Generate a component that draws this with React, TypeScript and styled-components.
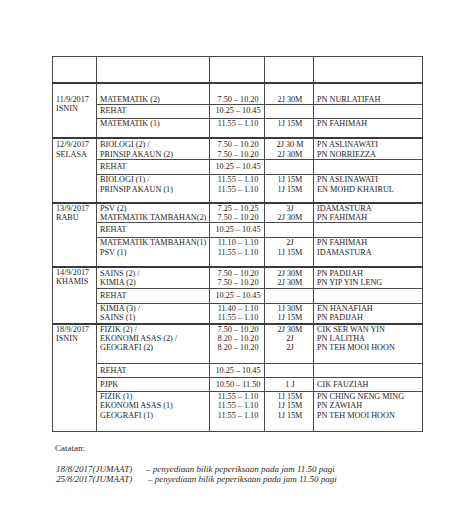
import React from 'react';
import styled, { createGlobalStyle } from 'styled-components';

const GlobalStyle = createGlobalStyle`
  html, body {
    margin: 0;
    padding: 0;
    background: #ffffff;
  }
  body {
    font-family: "Liberation Serif", "Times New Roman", serif;
    color: #222;
  }
`;

type Lesson = {
  subj: string[];
  time: string[];
  dur: string[];
  who: string[];
  h: number;
  pad?: number;
};

type Group = {
  date: string;
  day: string;
  pad: number;
  lessons: Lesson[];
};

const rehat = (h: number): Lesson => ({
  subj: ['REHAT'],
  time: ['10.25 – 10.45'],
  dur: [],
  who: [],
  h,
  pad: 2,
});

const groups: Group[] = [
  {
    date: '11/9/2017',
    day: 'ISNIN',
    pad: 11,
    lessons: [
      { subj: ['MATEMATIK (2)'], time: ['7.50 – 10.20'], dur: ['2J 30M'], who: ['PN NURLATIFAH'], h: 21, pad: 11 },
      { ...rehat(14), pad: 1 },
      { subj: ['MATEMATIK (1)'], time: ['11.55 – 1.10'], dur: ['1J 15M'], who: ['PN FAHIMAH'], h: 20 },
    ],
  },
  {
    date: '12/9/2017',
    day: 'SELASA',
    pad: 1,
    lessons: [
      {
        subj: ['BIOLOGI (2) /', 'PRINSIP AKAUN (2)'],
        time: ['7.50 – 10.20', '7.50 – 10.20'],
        dur: ['2J 30 M', '2J 30M'],
        who: ['PN ASLINAWATI', 'PN NORRIEZZA'],
        h: 21,
        pad: 1,
      },
      rehat(15),
      {
        subj: ['BIOLOGI (1) /', 'PRINSIP AKAUN (1)'],
        time: ['11.55 – 1.10', '11.55 – 1.10'],
        dur: ['1J 15M', '1J 15M'],
        who: ['PN ASLINAWATI', 'EN MOHD KHAIRUL'],
        h: 28,
      },
    ],
  },
  {
    date: '13/9/2017',
    day: 'RABU',
    pad: 0,
    lessons: [
      {
        subj: ['PSV (2)', 'MATEMATIK TAMBAHAN(2)'],
        time: ['7.25 – 10.25', '7.50 – 10.20'],
        dur: ['3J', '2J 30M'],
        who: ['IDAMASTURA', 'PN FAHIMAH'],
        h: 20,
      },
      rehat(15),
      {
        subj: ['MATEMATIK TAMBAHAN(1)', 'PSV (1)'],
        time: ['11.10 – 1.10', '11.55 – 1.10'],
        dur: ['2J', '1J 15M'],
        who: ['PN FAHIMAH', 'IDAMASTURA'],
        h: 29,
      },
    ],
  },
  {
    date: '14/9/2017',
    day: 'KHAMIS',
    pad: 0,
    lessons: [
      {
        subj: ['SAINS (2) /', 'KIMIA (2)'],
        time: ['7.50 – 10.20', '7.50 – 10.20'],
        dur: ['2J 30M', '2J 30M'],
        who: ['PN PADIJAH', 'PN YIP YIN LENG'],
        h: 21,
        pad: 1,
      },
      rehat(15),
      {
        subj: ['KIMIA (3) /', 'SAINS (1)'],
        time: ['11.40 – 1.10', '11.55 – 1.10'],
        dur: ['1J 30M', '1J 15M'],
        who: ['EN HANAFIAH', 'PN PADIJAH'],
        h: 20,
      },
    ],
  },
  {
    date: '18/9/2017',
    day: 'ISNIN',
    pad: 0,
    lessons: [
      {
        subj: ['FIZIK (2) /', 'EKONOMI ASAS (2) /', 'GEOGRAFI (2)'],
        time: ['7.50 – 10.20', '8.20 – 10.20', '8.20 – 10.20'],
        dur: ['2J 30M', '2J', '2J'],
        who: ['CIK SER WAN YIN', 'PN LALITHA', 'PN TEH MOOI HOON'],
        h: 40,
      },
      rehat(14),
      { subj: ['PJPK'], time: ['10.50 – 11.50'], dur: ['1 J'], who: ['CIK FAUZIAH'], h: 14, pad: 2 },
      {
        subj: ['FIZIK (1)', 'EKONOMI ASAS (1)', 'GEOGRAFI (1)'],
        time: ['11.55 – 1.10', '11.55 – 1.10', '11.55 – 1.10'],
        dur: ['1J 15M', '1J 15M', '1J 15M'],
        who: ['PN CHING NENG MING', 'PN ZAWIAH', 'PN TEH MOOI HOON'],
        h: 40,
      },
    ],
  },
];

const Page = styled.div`
  padding: 56px 0 0 52px;
  width: 474px;
  height: 511px;
  box-sizing: border-box;
  overflow: hidden;
`;

const Sheet = styled.table`
  width: 370px;
  border-collapse: collapse;
  table-layout: fixed;
  font-size: 8.2px;
  line-height: 9.4px;
  color: #232323;
  border: 1.5px solid #3c3c3c;
`;

const Row = styled.tr<{ $h: number; $group?: boolean }>`
  height: ${(p) => p.$h}px;
  ${(p) => (p.$group ? 'border-top: 2px solid #3a3a3a;' : '')}
`;

const Cell = styled.td<{ $align?: 'left' | 'center'; $pad?: number }>`
  border: 1px solid #4a4a4a;
  vertical-align: top;
  text-align: ${(p) => p.$align || 'left'};
  padding: ${(p) => p.$pad ?? 0}px 1px 0 3px;
  white-space: nowrap;
  overflow: hidden;
`;

const Line = styled.div`
  height: 9.4px;
`;

const Notes = styled.section`
  padding: 11px 0 0 3px;
  font-size: 9px;
  line-height: 10px;
  color: #2a2a2a;
`;

const NotesTitle = styled.div`
  margin-bottom: 11px;
`;

const NoteLine = styled.div`
  font-style: italic;
  padding-left: 1px;
  white-space: nowrap;
`;

const NoteDate = styled.span<{ $w: number }>`
  display: inline-block;
  width: ${(p) => p.$w}px;
`;

const lines = (items: string[]) => items.map((t, i) => <Line key={i}>{t}</Line>);

export default function App() {
  return (
    <>
      <GlobalStyle />
      <Page>
        <Sheet>
          <colgroup>
            <col style={{ width: 44 }} />
            <col style={{ width: 113 }} />
            <col style={{ width: 55 }} />
            <col style={{ width: 49 }} />
            <col style={{ width: 109 }} />
          </colgroup>
          <tbody>
            <Row $h={26}>
              <Cell />
              <Cell />
              <Cell />
              <Cell />
              <Cell />
            </Row>
            {groups.map((g) =>
              g.lessons.map((l, i) => (
                <Row key={g.date + i} $h={l.h} $group={i === 0}>
                  {i === 0 && (
                    <Cell rowSpan={g.lessons.length} $pad={g.pad}>
                      <Line>{g.date}</Line>
                      <Line>{g.day}</Line>
                    </Cell>
                  )}
                  <Cell $pad={l.pad}>{lines(l.subj)}</Cell>
                  <Cell $align="center" $pad={l.pad}>{lines(l.time)}</Cell>
                  <Cell $align="center" $pad={l.pad}>{lines(l.dur)}</Cell>
                  <Cell $pad={l.pad}>{lines(l.who)}</Cell>
                </Row>
              ))
            )}
          </tbody>
        </Sheet>
        <Notes>
          <NotesTitle>Catatan:</NotesTitle>
          <NoteLine>
            <NoteDate $w={90}>18/8/2017(JUMAAT)</NoteDate>– penyediaan bilik peperiksaan pada jam 11.50 pagi
          </NoteLine>
          <NoteLine>
            <NoteDate $w={92}>25/8/2017(JUMAAT)</NoteDate>– penyediaan bilik peperiksaan pada jam 11.50 pagi
          </NoteLine>
        </Notes>
      </Page>
    </>
  );
}
